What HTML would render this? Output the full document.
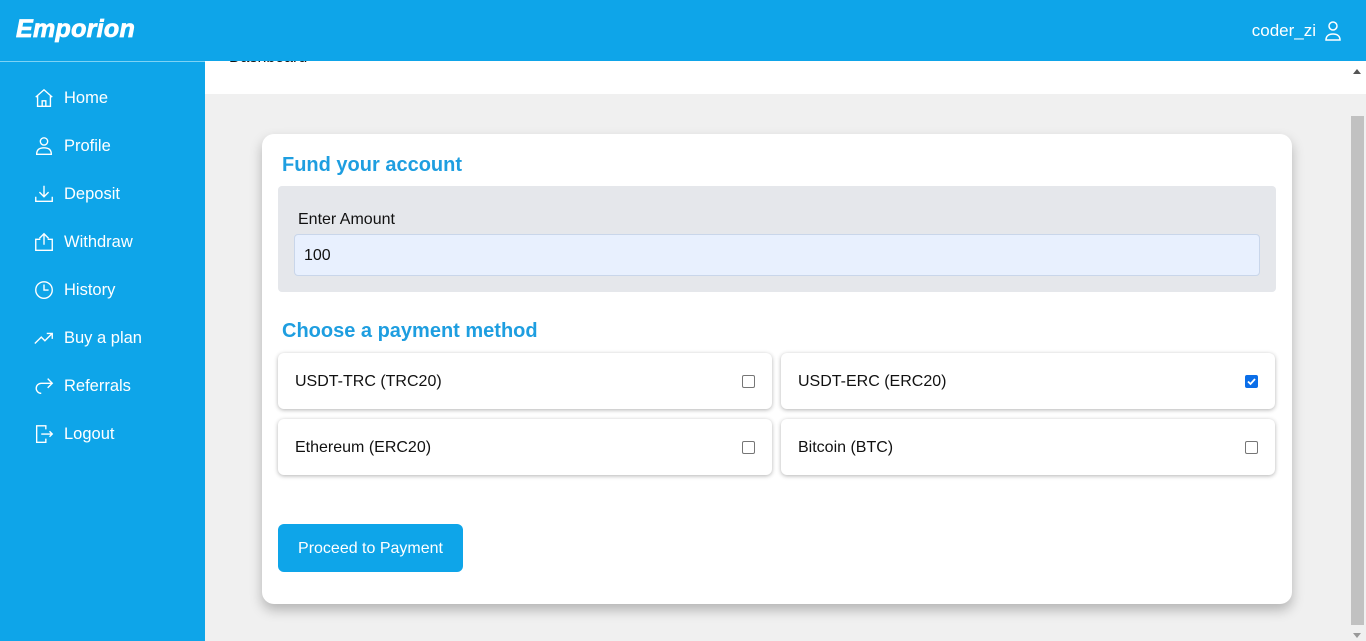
<!DOCTYPE html>
<html><head><style>
*{box-sizing:border-box;margin:0;padding:0}
body{width:1366px;height:641px;overflow:hidden;font-family:"Liberation Sans",sans-serif;background:#f0f0f0;position:relative}
.hdr{position:absolute;left:0;top:0;width:1366px;height:61px;background:#0ea5e9;z-index:3}
.logo{position:absolute;left:16px;top:15px;color:#fff;font-size:25px;font-weight:900;font-style:italic;letter-spacing:0.3px;-webkit-text-stroke:0.8px #fff}
.user{position:absolute;right:24px;top:20px;color:#fff;font-size:17px;display:flex;align-items:center;gap:8px}
.side{position:absolute;left:0;top:61px;width:205px;height:580px;background:#0ea5e9;border-top:1px solid #7dd3f5;z-index:2}
.item{position:absolute;left:33px;display:flex;align-items:center;gap:9px;color:#fff;font-size:16.5px}
.item svg{width:22px;height:22px}
.main{position:absolute;left:205px;top:61px;width:1144px;height:33px;background:#fff;overflow:hidden}
.main span{position:absolute;left:24px;top:-12px;font-size:16px;color:#111}
.sb{position:absolute;left:1349px;top:61px;width:17px;height:580px;background:#f0f0f0}
.thumb{position:absolute;left:2px;top:55px;width:13px;height:509px;background:#c1c1c1}
.card{position:absolute;left:262px;top:134px;width:1030px;height:470px;background:#fff;border-radius:12px;box-shadow:0 6px 12px rgba(0,0,0,.25)}
h2{position:absolute;left:20px;font-size:20px;color:#1e9ee0;font-weight:bold}
.amt{position:absolute;left:16px;top:52px;width:998px;height:106px;background:#e5e7eb;border-radius:4px}
.amt label{position:absolute;left:20px;top:25px;font-size:16px;color:#111}
.amt .in{position:absolute;left:16px;top:48px;width:966px;height:42px;background:#e8f0fe;border:1px solid #c9d6ea;border-radius:4px;font-size:16px;padding:12px 9px;color:#111}
.opt{position:absolute;width:494px;height:56px;background:#fff;border-radius:6px;box-shadow:0 1px 4px rgba(0,0,0,.3);font-size:16px;color:#111;padding:20px 17px}
.cb{position:absolute;right:17px;top:22px;width:13px;height:13px;border:1px solid #767676;border-radius:2px;background:#fff}
.cb.on{background:#0b6ee8;border-color:#0b6ee8}
.btn{position:absolute;left:16px;top:390px;width:185px;height:48px;background:#0ea5e9;color:#fff;border-radius:6px;font-size:16px;text-align:center;line-height:50px}
</style></head><body>
<div class="hdr"><div class="logo">Emporion</div>
<div class="user">coder_zi <svg width="18" height="22" viewBox="0 0 18 22" fill="none" stroke="#fff" stroke-width="1.5"><circle cx="9" cy="6" r="4"/><path d="M2 20c0-4 3-6 7-6s7 2 7 6z"/></svg></div></div>
<div class="side">
<div class="item" style="top:25px"><svg viewBox="0 0 24 24" fill="none" stroke="#fff" stroke-width="1.5"><path d="M3 11l9-8 9 8M5 9v12h14V9M10 21v-6h4v6"/></svg>Home</div>
<div class="item" style="top:73px"><svg viewBox="0 0 24 24" fill="none" stroke="#fff" stroke-width="1.5"><circle cx="12" cy="7" r="4"/><path d="M4 21c0-5 3-7 8-7s8 2 8 7z"/></svg>Profile</div>
<div class="item" style="top:121px"><svg viewBox="0 0 24 24" fill="none" stroke="#fff" stroke-width="1.5"><path d="M3 15v5h18v-5M12 3v12M7 10l5 5 5-5"/></svg>Deposit</div>
<div class="item" style="top:169px"><svg viewBox="0 0 24 24" fill="none" stroke="#fff" stroke-width="1.5"><path d="M8 9H3v12h18V9h-5M12 15V3M7 8l5-5 5 5"/></svg>Withdraw</div>
<div class="item" style="top:217px"><svg viewBox="0 0 24 24" fill="none" stroke="#fff" stroke-width="1.5"><circle cx="12" cy="12" r="9"/><path d="M12 6v6h5"/></svg>History</div>
<div class="item" style="top:265px"><svg viewBox="0 0 24 24" fill="none" stroke="#fff" stroke-width="1.5"><path d="M2 18l7-7 4 4 8-8M15 7h6v6"/></svg>Buy a plan</div>
<div class="item" style="top:313px"><svg viewBox="0 0 24 24" fill="none" stroke="#fff" stroke-width="1.5"><path d="M20 9H9a5 5 0 000 11M16 4l5 5-5 5"/></svg>Referrals</div>
<div class="item" style="top:361px"><svg viewBox="0 0 24 24" fill="none" stroke="#fff" stroke-width="1.5"><path d="M14 7V3H4v18h10v-4M9 12h12M18 9l3 3-3 3"/></svg>Logout</div>
</div>
<div class="main"><span>Dashboard</span></div>
<div class="sb"><div style="position:absolute;left:0;top:0;width:17px;height:33px;background:#fff"></div><div style="position:absolute;left:4px;top:8px;border:4px solid transparent;border-bottom:5px solid #555;border-top:0"></div><div class="thumb"></div><div style="position:absolute;left:4px;bottom:3px;border:4px solid transparent;border-top:5px solid #999;border-bottom:0"></div></div>
<div class="card">
<h2 style="top:20px">Fund your account</h2>
<div class="amt"><label>Enter Amount</label><div class="in">100</div></div>
<h2 style="top:186px">Choose a payment method</h2>
<div class="opt" style="left:16px;top:219px">USDT-TRC (TRC20)<div class="cb"></div></div>
<div class="opt" style="left:519px;top:219px">USDT-ERC (ERC20)<div class="cb on"><svg width="11" height="11" viewBox="0 0 11 11" style="position:absolute;left:0;top:0"><path d="M2 5.5l2.5 2.5L9 3" stroke="#fff" stroke-width="1.8" fill="none"/></svg></div></div>
<div class="opt" style="left:16px;top:285px">Ethereum (ERC20)<div class="cb"></div></div>
<div class="opt" style="left:519px;top:285px">Bitcoin (BTC)<div class="cb"></div></div>
<div class="btn">Proceed to Payment</div>
</div>
</body></html>
